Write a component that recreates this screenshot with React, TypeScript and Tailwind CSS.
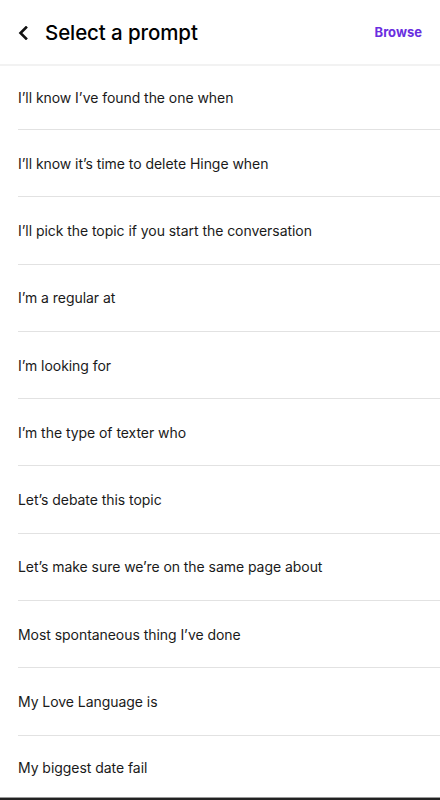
const prompts = [
  "I’ll know I’ve found the one when",
  "I’ll know it’s time to delete Hinge when",
  "I’ll pick the topic if you start the conversation",
  "I’m a regular at",
  "I’m looking for",
  "I’m the type of texter who",
  "Let’s debate this topic",
  "Let’s make sure we’re on the same page about",
  "Most spontaneous thing I’ve done",
  "My Love Language is",
  "My biggest date fail",
];

export default function App() {
  return (
    <div className="w-[440px] h-[800px] bg-white overflow-hidden flex flex-col font-['Inter',sans-serif] text-black">
      <div className="h-[66px] shrink-0 flex items-center px-[18px] pt-[2px] border-b-2 border-[#f2f2f2]">
        <svg width="10" height="14" viewBox="0 0 10 14" className="mr-[17px]">
          <path d="M8 1.5 L2.5 7 L8 12.5" fill="none" stroke="#111" strokeWidth="2.6" strokeLinecap="square" />
        </svg>
        <h1 className="text-[20.5px] font-medium tracking-[-0.1px]">Select a prompt</h1>
        <span className="ml-auto text-[13px] font-bold text-[#6a2ee0]">Browse</span>
      </div>
      <div className="flex-1 flex flex-col">
        {prompts.map((p, i) => {
          const last = i === prompts.length - 1;
          const h = i === 0 ? "h-[64px]" : last ? "pt-[3px]" : "h-[67.3px]";
          return (
            <div key={i} className={"pl-[18px] flex" + (last ? " flex-1" : "")}>
              <div className={"flex-1 flex items-center text-[14px] text-[#1a1a1a] tracking-[-0.05px] " + h + (last ? "" : " border-b border-[#e2e2e2]")}>
                {p}
              </div>
            </div>
          );
        })}
      </div>
      <div className="h-[3px] shrink-0 bg-[#222] border-t border-[#999]" />
    </div>
  );
}
